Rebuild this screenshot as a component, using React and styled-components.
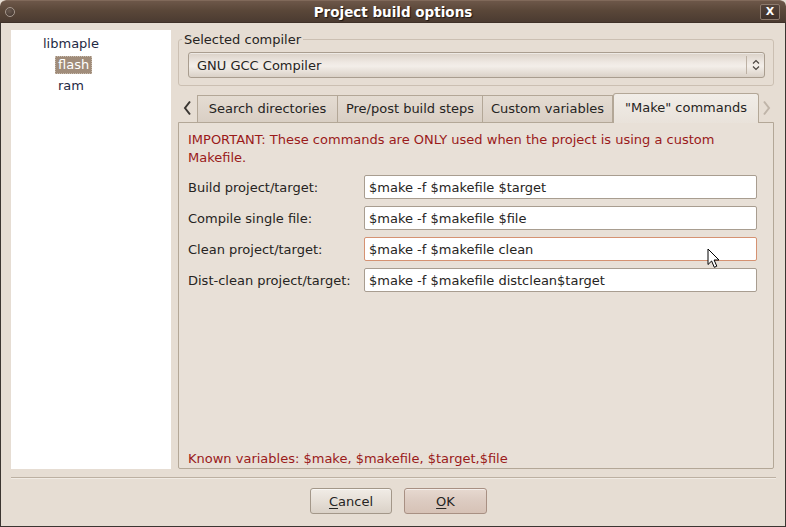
import React from 'react';
import styled, { createGlobalStyle } from 'styled-components';

const Global = createGlobalStyle`
  html, body { margin: 0; padding: 0; background: #e6ddd3; }
  body {
    font-family: "DejaVu Sans", "Noto Sans", sans-serif;
    font-size: 13px;
    color: #262422;
  }
  * { box-sizing: border-box; }
`;

const Window = styled.div`
  position: relative;
  width: 786px;
  height: 527px;
  display: flex;
  flex-direction: column;
  background: #e6ddd3;
  border-radius: 6px 6px 0 0;
  overflow: hidden;
`;

const TitleBar = styled.div`
  height: 23px;
  flex: none;
  display: grid;
  grid-template-columns: 1fr auto 1fr;
  align-items: center;
  background: linear-gradient(#6d5749, #5a4739 45%, #4b3b31);
  border-top: 1px solid #80695a;
  border-bottom: 1px solid #3f3129;
  border-radius: 6px 6px 0 0;
`;

const Orb = styled.span`
  justify-self: start;
  margin-left: 5px;
  width: 10px;
  height: 10px;
  border-radius: 50%;
  border: 1px solid #a89a90;
  background: radial-gradient(circle at 40% 35%, #6a5a50, #3f322b);
`;

const Title = styled.div`
  color: #ffffff;
  font-weight: bold;
  font-size: 13.5px;
  text-shadow: 1px 1px 1px #1e1612;
`;

const CloseBtn = styled.span`
  justify-self: end;
  margin-right: 6px;
  width: 20px;
  height: 16px;
  display: flex;
  align-items: center;
  justify-content: center;
  border: 1px solid #8d7a6d;
  border-radius: 2px;
  background: linear-gradient(#54433a, #3f312a);
  color: #fff;
  font-weight: bold;
  font-size: 11px;
  line-height: 1;
`;

const Body = styled.div`
  flex: 1;
  display: flex;
  flex-direction: column;
  padding: 7px 10px 0 10px;
  border-left: 1px solid #3b3531;
  border-right: 1px solid #3b3531;
  border-bottom: 1px solid #3b3531;
`;

const MainRow = styled.div`
  height: 439px;
  display: flex;
  gap: 7px;
`;

const Tree = styled.div`
  width: 160px;
  flex: none;
  background: #ffffff;
  padding-top: 3px;
`;

const TreeRow = styled.div`
  height: 21px;
  display: flex;
  align-items: center;
  padding-left: ${p => p.$indent}px;
`;

const TreeLabel = styled.span`
  line-height: 16px;
  padding: 0 2px;
  border: 1px ${p => (p.$selected ? 'dotted #c9bcae' : 'solid transparent')};
  background: ${p => (p.$selected ? '#a08c7a' : 'transparent')};
  color: ${p => (p.$selected ? '#ffffff' : '#1f2a44')};
`;

const RightCol = styled.div`
  width: 596px;
  flex: none;
  display: flex;
  flex-direction: column;
`;

const Group = styled.fieldset`
  margin: 2px 0 0 0;
  padding: 5px 8px 7px 9px;
  border: 1px solid #cbbfb2;
  border-radius: 3px;
  min-width: 0;
`;

const GroupLegend = styled.legend`
  margin-left: -6px;
  padding: 0 2px;
  line-height: 15px;
  color: #262422;
`;

const Select = styled.div`
  height: 26px;
  display: flex;
  align-items: center;
  border: 1px solid #a99d8f;
  border-radius: 3px;
  background: linear-gradient(#dad1c7, #efe9e3 40%, #f3eee9 55%, #dad1c7);
  box-shadow: inset 0 1px 0 rgba(255, 255, 255, 0.5);
`;

const SelectText = styled.span`
  flex: 1;
  padding-left: 8px;
`;

const SelectArrow = styled.span`
  width: 18px;
  height: 18px;
  display: flex;
  align-items: center;
  justify-content: center;
  border-left: 1px solid #bdb1a4;
`;

const TabRow = styled.div`
  margin-top: 7px;
  margin-bottom: -1px;
  height: 30px;
  display: flex;
  align-items: flex-end;
`;

const ScrollArrow = styled.span`
  width: ${p => p.$w}px;
  height: 29px;
  display: flex;
  align-items: center;
  justify-content: center;
  margin-bottom: 1px;
`;

const Tab = styled.div`
  position: relative;
  z-index: 1;
  width: ${p => p.$w}px;
  height: ${p => (p.$active ? 30 : 27)}px;
  margin-bottom: ${p => (p.$active ? 0 : 1)}px;
  display: flex;
  align-items: center;
  justify-content: center;
  padding-bottom: 2px;
  white-space: nowrap;
  border: 1px solid #b3a797;
  border-bottom: none;
  border-right: ${p => (p.$active || p.$last ? '1px solid #b3a797' : 'none')};
  border-radius: ${p => (p.$active ? '3px 3px 0 0' : '0')};
  background: ${p =>
    p.$active
      ? 'linear-gradient(#f1ede8, #e9e2da)'
      : 'linear-gradient(#e4dcd2, #d9cfc4)'};
  color: #262422;
`;

const Panel = styled.div`
  flex: 1;
  display: flex;
  flex-direction: column;
  border: 1px solid #b3a797;
  border-radius: 0 0 2px 2px;
  background: #e8e0d7;
  padding: 8px 16px 0 9px;
`;

const Notice = styled.div`
  line-height: 18px;
  color: #9a1a1a;
`;

const Form = styled.div`
  margin-top: 8px;
  display: grid;
  grid-template-columns: 176px 1fr;
  grid-auto-rows: 24px;
  row-gap: 7px;
  align-items: center;
`;

const FieldLabel = styled.span`
  color: #262422;
`;

const Input = styled.div`
  height: 24px;
  display: flex;
  align-items: center;
  padding: 0 4px;
  background: #ffffff;
  border: 1px solid ${p => (p.$hover ? '#d59272' : '#a89d90')};
  border-radius: 2px;
  color: #262422;
  white-space: nowrap;
`;

const Footnote = styled.div`
  margin-top: auto;
  line-height: 18px;
  color: #9a1a1a;
`;

const Separator = styled.div`
  margin-top: 8px;
  height: 2px;
  border-top: 1px solid #bcb0a2;
  border-bottom: 1px solid #f1ebe4;
  margin-right: -1px;
`;

const ButtonRow = styled.div`
  margin-top: 9px;
  display: flex;
  justify-content: center;
  gap: 12px;
  padding-left: 11px;
`;

const Button = styled.div`
  width: ${p => p.$w}px;
  height: 26px;
  display: flex;
  align-items: center;
  justify-content: center;
  border: 1px solid ${p => (p.$default ? '#a89083' : '#a39789')};
  border-radius: 3px;
  background: ${p =>
    p.$default
      ? 'linear-gradient(#e7d9d0, #dccbc1 50%, #d6c2b6)'
      : 'linear-gradient(#f1ece6, #e6dfd7 50%, #dad1c7)'};
  box-shadow: inset 0 1px 0 rgba(255, 255, 255, 0.55);
  color: #262422;
`;

const Mnemonic = styled.span`
  text-decoration: underline;
  text-underline-offset: 2px;
`;

const Pointer = styled.svg`
  position: absolute;
  left: 707px;
  top: 248px;
  pointer-events: none;
`;

const tabs = [
  { label: 'Search directories', w: 140 },
  { label: 'Pre/post build steps', w: 145 },
  { label: 'Custom variables', w: 131, last: true },
];

const fields = [
  { label: 'Build project/target:', value: '$make -f $makefile $target' },
  { label: 'Compile single file:', value: '$make -f $makefile $file' },
  { label: 'Clean project/target:', value: '$make -f $makefile clean', hover: true },
  { label: 'Dist-clean project/target:', value: '$make -f $makefile distclean$target' },
];

export default function App() {
  return (
    <>
      <Global />
      <Window>
        <TitleBar>
          <Orb />
          <Title>Project build options</Title>
          <CloseBtn>X</CloseBtn>
        </TitleBar>
        <Body>
          <MainRow>
            <Tree>
              <TreeRow $indent={29}>
                <TreeLabel>libmaple</TreeLabel>
              </TreeRow>
              <TreeRow $indent={44}>
                <TreeLabel $selected>flash</TreeLabel>
              </TreeRow>
              <TreeRow $indent={44}>
                <TreeLabel>ram</TreeLabel>
              </TreeRow>
            </Tree>
            <RightCol>
              <Group>
                <GroupLegend>Selected compiler</GroupLegend>
                <Select>
                  <SelectText>GNU GCC Compiler</SelectText>
                  <SelectArrow>
                    <svg width="8" height="12" viewBox="0 0 8 12">
                      <path d="M1 4.5 L4 1.5 L7 4.5 M1 7.5 L4 10.5 L7 7.5" fill="none" stroke="#4a4540" strokeWidth="1.2" />
                    </svg>
                  </SelectArrow>
                </Select>
              </Group>
              <TabRow>
                <ScrollArrow $w={19}>
                  <svg width="9" height="16" viewBox="0 0 9 16">
                    <path d="M7 1.5 L2 8 L7 14.5" fill="none" stroke="#3a3632" strokeWidth="2" />
                  </svg>
                </ScrollArrow>
                {tabs.map(t => (
                  <Tab key={t.label} $w={t.w} $last={t.last}>{t.label}</Tab>
                ))}
                <Tab $active $w={146}>"Make" commands</Tab>
                <ScrollArrow $w={15}>
                  <svg width="9" height="16" viewBox="0 0 9 16">
                    <path d="M2 1.5 L7 8 L2 14.5" fill="none" stroke="#bfb4a8" strokeWidth="2" />
                  </svg>
                </ScrollArrow>
              </TabRow>
              <Panel>
                <Notice>
                  IMPORTANT: These commands are ONLY used when the project is using a custom Makefile.
                </Notice>
                <Form>
                  {fields.map(f => (
                    <React.Fragment key={f.label}>
                      <FieldLabel>{f.label}</FieldLabel>
                      <Input $hover={f.hover}>{f.value}</Input>
                    </React.Fragment>
                  ))}
                </Form>
                <Footnote>Known variables: $make, $makefile, $target,$file</Footnote>
              </Panel>
            </RightCol>
          </MainRow>
          <Separator />
          <ButtonRow>
            <Button $w={82}><span><Mnemonic>C</Mnemonic>ancel</span></Button>
            <Button $w={83} $default><span><Mnemonic>O</Mnemonic>K</span></Button>
          </ButtonRow>
        </Body>
        <Pointer width="14" height="22" viewBox="0 0 14 22">
          <path d="M1 1 L1 16.5 L4.6 13 L7.3 19.3 L9.8 18.2 L7.1 12 L12 12 Z" fill="#ffffff" stroke="#000000" strokeWidth="1" strokeLinejoin="round" />
        </Pointer>
      </Window>
    </>
  );
}
